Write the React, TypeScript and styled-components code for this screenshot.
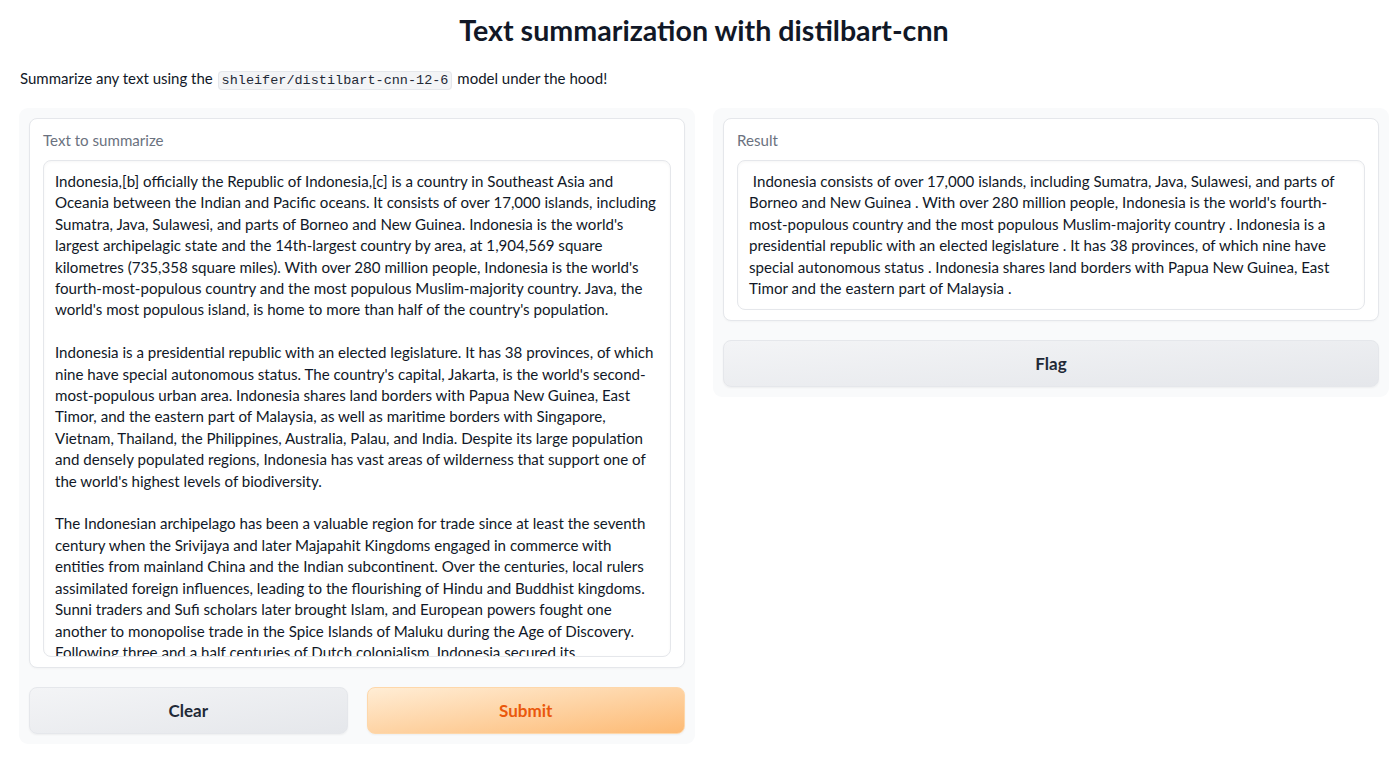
import React from "react";
import styled, { createGlobalStyle } from "styled-components";

const GlobalStyle = createGlobalStyle`
  html, body { margin: 0; padding: 0; background: #ffffff; }
  body { font-family: "Lato", "Liberation Sans", sans-serif; color: #1f2937; }
  * { box-sizing: border-box; }
`;

const Page = styled.div`
  width: 1400px;
  height: 758px;
  padding: 0 11px 0 19px;
  display: flex;
  flex-direction: column;
  overflow: hidden;
`;

const Title = styled.h1`
  margin: 13px 0 0;
  height: 34px;
  font-size: 28.6px;
  line-height: 34px;
  font-weight: 700;
  text-align: center;
  color: #111827;
`;

const Description = styled.p`
  margin: 19px 0 0 1px;
  height: 24px;
  font-size: 15px;
  line-height: 24px;
  color: #111827;
`;

const Code = styled.code`
  font-family: "Liberation Mono", "DejaVu Sans Mono", monospace;
  font-size: 13.5px;
  line-height: 18px;
  padding: 1px 3px;
  margin: 0 1px;
  background: #f3f4f6;
  border: 1px solid #e5e7eb;
  border-radius: 4px;
  color: #1f2937;
`;

const Columns = styled.div`
  margin-top: 18px;
  display: grid;
  grid-template-columns: 676px 676px;
  column-gap: 18px;
  align-items: start;
`;

const Panel = styled.div`
  background: #f9fafb;
  border-radius: 9px;
  padding: 10px;
  display: flex;
  flex-direction: column;
  gap: 19px;
`;

const Block = styled.div`
  background: #ffffff;
  border: 1px solid #e5e7eb;
  border-radius: 8px;
  padding: 11px 13px 10px;
  display: flex;
  flex-direction: column;
  gap: 10px;
  box-shadow: 0 1px 2px rgba(0, 0, 0, 0.03);
`;

const Label = styled.div`
  font-size: 15.1px;
  line-height: 20px;
  color: #6b7280;
`;

const TextBox = styled.div<{ $height: number }>`
  height: ${(p) => p.$height}px;
  border: 1px solid #e5e7eb;
  border-radius: 8px;
  padding: 10px 11px;
  overflow: hidden;
  background: #ffffff;
  box-shadow: inset 0 1px 3px rgba(0, 0, 0, 0.04);
  font-size: 15.1px;
  line-height: 21.4px;
  color: #111827;
`;

const Line = styled.div`
  white-space: pre;
  min-height: 21.4px;
`;

const ButtonRow = styled.div`
  display: grid;
  grid-template-columns: 1fr 1fr;
  column-gap: 19px;
`;

const Button = styled.button<{ $primary?: boolean }>`
  height: 47px;
  border-radius: 8px;
  font-family: "Lato", "Liberation Sans", sans-serif;
  font-size: 17px;
  font-weight: 700;
  cursor: pointer;
  border: 1px solid ${(p) => (p.$primary ? "#fed7aa" : "#e5e7eb")};
  color: ${(p) => (p.$primary ? "#ea580c" : "#1f2937")};
  background: ${(p) =>
    p.$primary
      ? "linear-gradient(to bottom right, #ffedd5, #fdba74)"
      : "linear-gradient(to bottom right, #f3f4f6, #e5e7eb)"};
  box-shadow: 0 1px 2px rgba(0, 0, 0, 0.05);
`;

const inputLines = [
  "Indonesia,[b] officially the Republic of Indonesia,[c] is a country in Southeast Asia and",
  "Oceania between the Indian and Pacific oceans. It consists of over 17,000 islands, including",
  "Sumatra, Java, Sulawesi, and parts of Borneo and New Guinea. Indonesia is the world's",
  "largest archipelagic state and the 14th-largest country by area, at 1,904,569 square",
  "kilometres (735,358 square miles). With over 280 million people, Indonesia is the world's",
  "fourth-most-populous country and the most populous Muslim-majority country. Java, the",
  "world's most populous island, is home to more than half of the country's population.",
  "",
  "Indonesia is a presidential republic with an elected legislature. It has 38 provinces, of which",
  "nine have special autonomous status. The country's capital, Jakarta, is the world's second-",
  "most-populous urban area. Indonesia shares land borders with Papua New Guinea, East",
  "Timor, and the eastern part of Malaysia, as well as maritime borders with Singapore,",
  "Vietnam, Thailand, the Philippines, Australia, Palau, and India. Despite its large population",
  "and densely populated regions, Indonesia has vast areas of wilderness that support one of",
  "the world's highest levels of biodiversity.",
  "",
  "The Indonesian archipelago has been a valuable region for trade since at least the seventh",
  "century when the Srivijaya and later Majapahit Kingdoms engaged in commerce with",
  "entities from mainland China and the Indian subcontinent. Over the centuries, local rulers",
  "assimilated foreign influences, leading to the flourishing of Hindu and Buddhist kingdoms.",
  "Sunni traders and Sufi scholars later brought Islam, and European powers fought one",
  "another to monopolise trade in the Spice Islands of Maluku during the Age of Discovery.",
  "Following three and a half centuries of Dutch colonialism, Indonesia secured its",
  "independence after World War II.",
];

const resultLines = [
  " Indonesia consists of over 17,000 islands, including Sumatra, Java, Sulawesi, and parts of",
  "Borneo and New Guinea . With over 280 million people, Indonesia is the world's fourth-",
  "most-populous country and the most populous Muslim-majority country . Indonesia is a",
  "presidential republic with an elected legislature . It has 38 provinces, of which nine have",
  "special autonomous status . Indonesia shares land borders with Papua New Guinea, East",
  "Timor and the eastern part of Malaysia .",
];

export default function App() {
  return (
    <>
      <GlobalStyle />
      <Page>
        <Title>Text summarization with distilbart-cnn</Title>
        <Description>
          Summarize any text using the <Code>shleifer/distilbart-cnn-12-6</Code> model under the hood!
        </Description>
        <Columns>
          <Panel>
            <Block>
              <Label>Text to summarize</Label>
              <TextBox $height={497}>
                {inputLines.map((l, i) => (
                  <Line key={i}>{l}</Line>
                ))}
              </TextBox>
            </Block>
            <ButtonRow>
              <Button>Clear</Button>
              <Button $primary>Submit</Button>
            </ButtonRow>
          </Panel>
          <Panel>
            <Block>
              <Label>Result</Label>
              <TextBox $height={150}>
                {resultLines.map((l, i) => (
                  <Line key={i}>{l}</Line>
                ))}
              </TextBox>
            </Block>
            <Button>Flag</Button>
          </Panel>
        </Columns>
      </Page>
    </>
  );
}
